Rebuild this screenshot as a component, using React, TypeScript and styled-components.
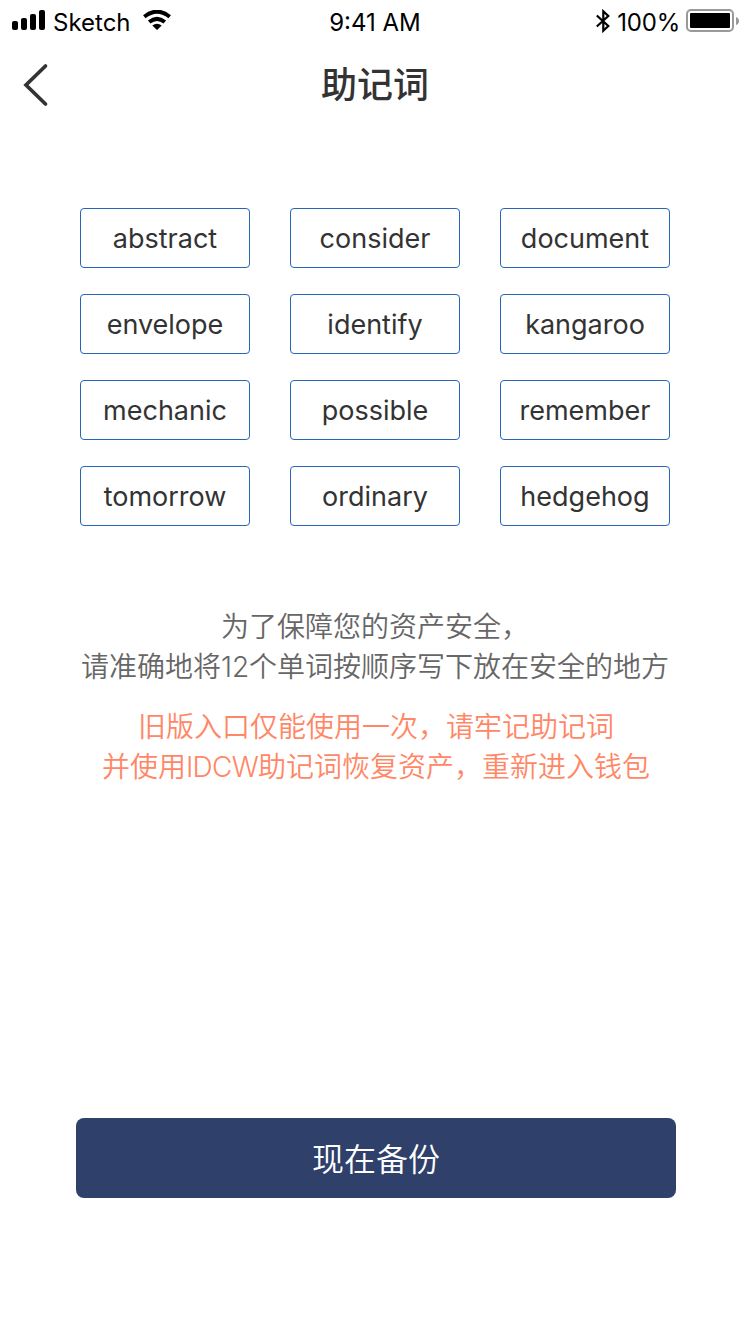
import React from "react";
import styled, { createGlobalStyle } from "styled-components";

const Global = createGlobalStyle`
  body { margin: 0; background: #fff; }
  * { box-sizing: border-box; }
`;
const Screen = styled.div`
  width: 750px; height: 1334px; background: #fff; overflow: hidden;
  display: flex; flex-direction: column;
  font-family: Inter, "Noto Sans CJK SC", sans-serif;
`;
const StatusBar = styled.header`
  height: 40px; display: grid; grid-template-columns: 1fr auto 1fr; align-items: center;
  padding: 6px 12px 0; font: 24px/34px Inter, sans-serif; color: #000;
`;
const StatusGroup = styled.div<{ $end?: boolean }>`
  display: flex; align-items: center; height: 34px;
  justify-content: ${(p) => (p.$end ? "flex-end" : "flex-start")};
  margin-right: ${(p) => (p.$end ? "-2px" : "0")};
`;
const Carrier = styled.span`
  margin: 0 11px 0 7px; width: 79px;
`;
const Percent = styled.span`
  margin: 0 6px 0 7px; letter-spacing: -0.2px;
`;
const Icon = styled.svg`
  display: block; flex: none; margin-bottom: 5px;
`;
const NavBar = styled.nav`
  height: 88px; display: grid; grid-template-columns: 80px 1fr 80px; align-items: center;
`;
const Back = styled.button`
  border: 0; background: none; padding: 2px 0 0 22px; display: flex;
`;
const Title = styled.h1`
  margin: 0 0 4px; text-align: center; font: 500 36px/50px "Noto Sans CJK SC", sans-serif; color: #333;
`;
const Words = styled.ul`
  list-style: none; margin: 80px 80px 0; padding: 0;
  display: grid; grid-template-columns: repeat(3, 170px); gap: 26px 40px;
`;
const Word = styled.li`
  height: 60px; border: 1px solid #2566b8; border-radius: 4px;
  display: flex; align-items: center; justify-content: center;
  font-size: 27px; font-weight: 400; color: #333;
`;
const Note = styled.p<{ $warn?: boolean }>`
  margin: ${(p) => (p.$warn ? "20px 0 0 2px" : "81px 0 0")}; text-align: center; white-space: nowrap;
  font-size: 28px; font-weight: 350; line-height: 40px; color: ${(p) => (p.$warn ? "#ff8765" : "#666")};
`;
const Latin = styled.span`
  letter-spacing: -0.7px;
`;
const Backup = styled.button`
  margin: auto 74px 136px 76px; height: 80px; flex: none; border: 0; border-radius: 8px; padding: 0 0 3px;
  background: #2f406a; color: #fff; font: 350 32px/44px "Noto Sans CJK SC", sans-serif;
`;
const words = ["abstract","consider","document","envelope","identify","kangaroo","mechanic","possible","remember","tomorrow","ordinary","hedgehog"];

export default function App() {
  return (
    <Screen>
      <Global />
      <StatusBar>
        <StatusGroup>
          <Icon width="34" height="22" viewBox="0 0 34 22">
            <rect x="0" y="11" width="6" height="9" rx="2" />
            <rect x="9" y="8" width="6" height="12" rx="2" />
            <rect x="18" y="4" width="6" height="16" rx="2" />
            <rect x="27" y="0" width="6" height="20" rx="2" />
          </Icon>
          <Carrier>Sketch</Carrier>
          <Icon width="28" height="22" viewBox="0 0 28 22">
            <path d="M1.3 6.7Q14-3.4 26.7 6.7M6.2 12Q14 5.8 21.8 12" fill="none" stroke="#000" strokeWidth="4" />
            <path d="M9.3 15.6Q14 12 18.7 15.6L14 20Z" />
          </Icon>
        </StatusGroup>
        <span>9:41 AM</span>
        <StatusGroup $end>
          <Icon width="14" height="24" viewBox="0 0 14 24" fill="none" stroke="#000" strokeWidth="2.2">
            <path d="M.8 6.5L12.3 17L7.3 21.7V2.3L12.3 7L.8 17.5" />
          </Icon>
          <Percent>100%</Percent>
          <Icon width="54" height="23" viewBox="0 0 54 23">
            <rect x="1" y="1" width="46" height="21" rx="4" fill="none" stroke="#999" strokeWidth="2" />
            <rect x="4" y="4" width="40" height="15" rx="1" />
            <path d="M50 8Q53 9 53 12T50 16Z" fill="#999" />
          </Icon>
        </StatusGroup>
      </StatusBar>
      <NavBar>
        <Back aria-label="返回">
          <svg width="28" height="44" viewBox="0 0 28 44" fill="none" stroke="#333" strokeWidth="3.7" strokeLinecap="round"><path d="M23.5 3L4 22L23.5 41" /></svg>
        </Back>
        <Title>助记词</Title>
      </NavBar>
      <Words>{words.map((w) => <Word key={w}>{w}</Word>)}</Words>
      <Note>为了保障您的资产安全，<br />请准确地将12个单词按顺序写下放在安全的地方</Note>
      <Note $warn>旧版入口仅能使用一次，请牢记助记词<br />并使用<Latin>IDCW</Latin>助记词恢复资产，重新进入钱包</Note>
      <Backup>现在备份</Backup>
    </Screen>
  );
}
